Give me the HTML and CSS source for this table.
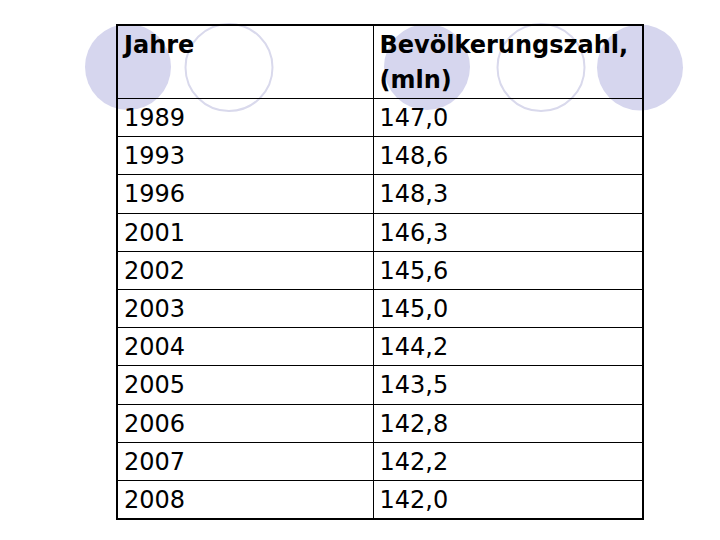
FILE: index.html
```html
<!DOCTYPE html>
<html lang="de">
<head>
<meta charset="utf-8">
<title>Bevölkerungszahl</title>
<link rel="stylesheet" href="styles.css">
</head>
<body>
<div class="slide">
  <svg class="deco" width="720" height="140" viewBox="0 0 720 140" aria-hidden="true">
    <circle cx="128" cy="67" r="43" fill="#d6d6ee"/>
    <circle cx="229" cy="67.5" r="43.5" fill="none" stroke="#d9d9ec" stroke-width="2"/>
    <circle cx="427" cy="67" r="43" fill="#d6d6ee"/>
    <circle cx="541" cy="67.5" r="43.5" fill="none" stroke="#d9d9ec" stroke-width="2"/>
    <circle cx="640" cy="67.5" r="43" fill="#d6d6ee"/>
  </svg>
  <table class="data">
    <colgroup><col class="c1"><col class="c2"></colgroup>
    <thead>
      <tr class="head"><th>Jahre</th><th>Bevölkerungszahl, (mln)</th></tr>
    </thead>
    <tbody>
      <tr><td>1989</td><td>147,0</td></tr>
      <tr><td>1993</td><td>148,6</td></tr>
      <tr><td>1996</td><td>148,3</td></tr>
      <tr><td>2001</td><td>146,3</td></tr>
      <tr><td>2002</td><td>145,6</td></tr>
      <tr><td>2003</td><td>145,0</td></tr>
      <tr><td>2004</td><td>144,2</td></tr>
      <tr><td>2005</td><td>143,5</td></tr>
      <tr><td>2006</td><td>142,8</td></tr>
      <tr><td>2007</td><td>142,2</td></tr>
      <tr><td>2008</td><td>142,0</td></tr>
    </tbody>
  </table>
</div>
</body>
</html>
```
FILE: styles.css
```css
html, body {
  margin: 0;
  padding: 0;
  background: #ffffff;
}
.slide {
  position: relative;
  width: 720px;
  height: 540px;
  box-sizing: border-box;
  padding: 24px 0 0 116px;
  font-family: "DejaVu Sans", Verdana, sans-serif;
  color: #000;
}
.deco {
  position: absolute;
  left: 0;
  top: 0;
  z-index: 0;
}
.data {
  position: relative;
  z-index: 1;
  border-collapse: collapse;
  table-layout: fixed;
  width: 528px;
  border: 2px solid #000;
  font-size: 24px;
}
.c1 { width: 256px; }
.data th,
.data td {
  border: 1px solid #000;
  text-align: left;
  vertical-align: top;
  padding: 2px 6px 0 6px;
  line-height: 35px;
}
.data th {
  font-weight: bold;
  height: 70px;
  padding-top: 2px;
}
.data tbody td {
  box-sizing: border-box;
  height: 38.2px;
}
```
